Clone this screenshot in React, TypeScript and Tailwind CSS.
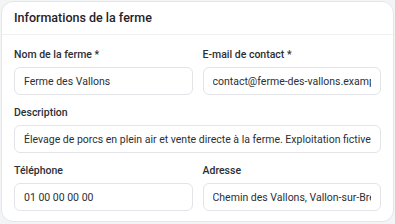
import React from 'react';

type FieldProps = {
  label: string;
  value: string;
  required?: boolean;
};

function Field({ label, value, required }: FieldProps) {
  return (
    <label className="flex flex-col gap-1 min-w-0">
      <span className="text-[10.5px] leading-4 font-medium text-[#2b2f36]">
        {label}
        {required && ' *'}
      </span>
      <input
        readOnly
        defaultValue={value}
        className="h-[28px] w-full rounded-md border border-[#e2e4e8] bg-white px-[9px] text-[10.5px] text-[#2b2f36] outline-none"
      />
    </label>
  );
}

export default function App() {
  return (
    <div
      className="min-h-screen bg-[#f3f4f5] p-px"
      style={{ fontFamily: 'Roboto, "Noto Sans", sans-serif' }}
    >
      <div className="w-[393px] rounded-xl border border-[#e4e6e9] bg-white">
        <div className="h-[33px] flex items-center px-3 border-b border-[#eef0f2]">
          <h2 className="text-[12.5px] font-medium text-[#1f2328]">Informations de la ferme</h2>
        </div>

        <div className="px-3 pt-3 pb-[10px] flex flex-col gap-[10px]">
          <div className="grid grid-cols-2 gap-[10px]">
            <Field label="Nom de la ferme" required value="Ferme des Vallons" />
            <Field label="E-mail de contact" required value="contact@ferme-des-vallons.example" />
          </div>
          <Field
            label="Description"
            value="Élevage de porcs en plein air et vente directe à la ferme. Exploitation fictive, données de démonstration."
          />
          <div className="grid grid-cols-2 gap-[10px]">
            <Field label="Téléphone" value="01 00 00 00 00" />
            <Field label="Adresse" value="Chemin des Vallons, Vallon-sur-Brèche" />
          </div>
        </div>
      </div>
    </div>
  );
}
